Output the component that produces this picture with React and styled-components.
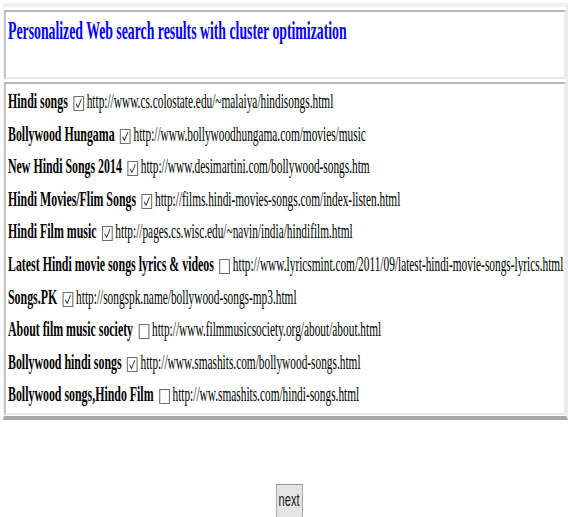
import React from "react";
import styled, { createGlobalStyle } from "styled-components";

const GlobalStyle = createGlobalStyle`
  html, body {
    margin: 0;
    padding: 0;
    background: #ffffff;
    overflow: hidden;
  }
  body {
    font-family: "Liberation Serif", "Times New Roman", serif;
    color: #000;
  }
`;

/* narrow, tall type used across the page */
const SQUEEZE = 0.54;

const Page = styled.div`
  padding: 3px 0 0 3px;
`;

const Frame = styled.div`
  border-style: solid;
  border-width: 4px 2px 4px 1px;
  border-color: #f0f0f0 #ececec #a6a6a6 #f4f4f4;
  padding: 3px 0 1px 0;
  display: flex;
  flex-direction: column;
  gap: 3px;
`;

const Cell = styled.div`
  border-style: solid;
  border-width: 2px;
  border-color: #b6b6b6 #ececec #e6e6e6 #c4c4c4;
  padding: ${(p) => p.$pad};
  height: ${(p) => p.$h};
  box-sizing: border-box;
  overflow: hidden;
`;

const Line = styled.div`
  white-space: nowrap;
  width: max-content;
  transform: scaleX(${SQUEEZE});
  transform-origin: left center;
  font-size: 22px;
  line-height: ${(p) => p.$lh || "32.6px"};
`;

const Title = styled(Line)`
  color: #0000ff;
  font-weight: 700;
  font-size: 25.5px;
`;

const Label = styled.span`
  font-weight: 700;
`;

const Url = styled.span`
  font-weight: 400;
  font-size: 21px;
`;

const Box = styled.span`
  display: inline-block;
  box-sizing: border-box;
  width: 20px;
  height: 15px;
  margin: 0 5px 0 10px;
  vertical-align: -3px;
  border-style: solid;
  border-width: 1px 2px;
  border-color: #707070;
  background: #fff;
  position: relative;

  svg {
    position: absolute;
    inset: 0;
    width: 100%;
    height: 100%;
  }
`;

const ButtonRow = styled.div`
  display: flex;
  justify-content: center;
  padding: 64px 0 0 8px;
`;

const NextButton = styled.button`
  width: 27px;
  height: 35px;
  padding: 0;
  border: 1px solid #a9a9a9;
  border-top-color: #9a9a9a;
  background: #e4e4e4;
  display: flex;
  align-items: center;
  justify-content: center;
  overflow: visible;
  font-family: "Liberation Sans", Arial, sans-serif;
  font-size: 18px;
  color: #222;
`;

const ButtonText = styled.span`
  display: inline-block;
  transform: scaleX(0.62);
  transform-origin: center;
  margin-top: -2px;
`;

const Check = ({ on }) => (
  <Box>
    {on && (
      <svg viewBox="0 0 18 13" preserveAspectRatio="none">
        <path d="M3.5 6.8 L7.5 10.4 L14.5 2.2" fill="none" stroke="#333" strokeWidth="1.6" />
      </svg>
    )}
  </Box>
);

const results = [
  { title: "Hindi songs", on: true, url: "http://www.cs.colostate.edu/~malaiya/hindisongs.html" },
  { title: "Bollywood Hungama", on: true, url: "http://www.bollywoodhungama.com/movies/music" },
  { title: "New Hindi Songs 2014", on: true, url: "http://www.desimartini.com/bollywood-songs.htm" },
  { title: "Hindi Movies/Flim Songs", on: true, url: "http://films.hindi-movies-songs.com/index-listen.html" },
  { title: "Hindi Film music", on: true, url: "http://pages.cs.wisc.edu/~navin/india/hindifilm.html" },
  { title: "Latest Hindi movie songs lyrics & videos", on: false, url: "http://www.lyricsmint.com/2011/09/latest-hindi-movie-songs-lyrics.html" },
  { title: "Songs.PK", on: true, url: "http://songspk.name/bollywood-songs-mp3.html" },
  { title: "About film music society", on: false, url: "http://www.filmmusicsociety.org/about/about.html" },
  { title: "Bollywood hindi songs", on: true, url: "http://www.smashits.com/bollywood-songs.html" },
  { title: "Bollywood songs,Hindo Film", on: false, url: "http://ww.smashits.com/hindi-songs.html" },
];

export default function App() {
  return (
    <>
      <GlobalStyle />
      <Page>
        <Frame>
          <Cell $pad="4px 0 0 2px" $h="69px">
            <Title $lh="30px">Personalized Web search results with cluster optimization</Title>
          </Cell>
          <Cell $pad="1px 0 0 2px" $h="333px">
            {results.map((r) => (
              <Line key={r.title}>
                <Label>{r.title}</Label>
                <Check on={r.on} />
                <Url>{r.url}</Url>
              </Line>
            ))}
          </Cell>
        </Frame>
        <ButtonRow>
          <NextButton type="button">
            <ButtonText>next</ButtonText>
          </NextButton>
        </ButtonRow>
      </Page>
    </>
  );
}
